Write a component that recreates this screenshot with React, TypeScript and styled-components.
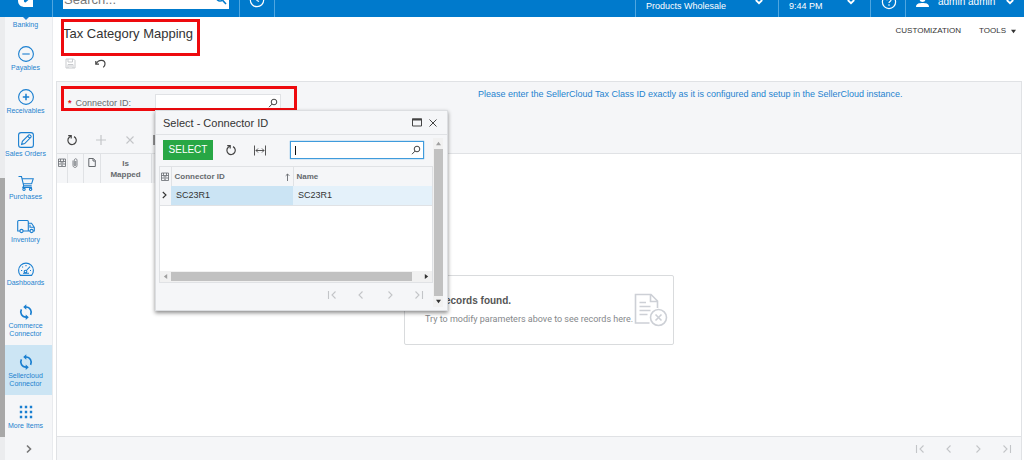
import React from 'react';
import styled, { createGlobalStyle, css } from 'styled-components';

const blue = '#007acc';
const link = '#2583cf';
const panel = '#f5f6f8';
const line = '#e0e2e5';
const muted = '#666a6e';

const GlobalStyle = createGlobalStyle`
  *, *::before, *::after { box-sizing: border-box; }
  body {
    margin: 0;
    background: #fff;
    color: #333;
    font-family: "Liberation Sans", Arial, sans-serif;
    font-size: 9px;
    line-height: 12px;
  }
  button, input { font: inherit; color: inherit; }
  svg { flex: none; }
`;

const Page = styled.div`
  position: relative;
  display: flex;
  flex-direction: column;
  min-height: 100vh;
`;

const Header = styled.header`
  display: flex;
  align-items: flex-end;
  height: 17px;
  overflow: hidden;
  background: ${blue};
  color: #fff;
`;

const HeaderCell = styled.div<{ $width: number }>`
  display: flex;
  align-items: flex-end;
  justify-content: center;
  flex: none;
  width: ${p => p.$width}px;
  height: 36px;
  border-right: 1px solid #4fa6e0;
`;

const LogoSpace = styled.div`
  display: flex;
  margin-bottom: 10px;
`;

const HeaderSearch = styled.div`
  display: flex;
  align-items: center;
  width: 166px;
  height: 20px;
  margin-bottom: 8px;
  padding: 0 2px 0 1px;
  background: #fff;
  color: ${blue};
`;

const HeaderInput = styled.input`
  flex: 1;
  min-width: 0;
  padding: 0;
  border: 0;
  outline: 0;
  background: none;
  font-size: 13px;
  &::placeholder { color: #777; opacity: 1; }
`;

const HeaderSpacer = styled.div`
  flex: 1;
  height: 36px;
  border-right: 1px solid #4fa6e0;
`;

const HeaderButton = styled.button<{ $width: number }>`
  display: flex;
  align-items: center;
  flex: none;
  width: ${p => p.$width}px;
  height: 36px;
  padding: 5px 15px 0 10px;
  border: 0;
  border-right: 1px solid #4fa6e0;
  background: none;
  text-align: left;
  &:last-child { border-right: 0; padding-right: 10px; }
`;

const HeaderText = styled.span`
  flex: 1;
  padding-top: 8px;
  white-space: nowrap;
`;

const UserName = styled.span`
  flex: 1;
  margin-left: 9px;
  font-size: 10px;
  white-space: nowrap;
`;

const IconOnly = styled.button<{ $dim?: boolean }>`
  display: inline-flex;
  align-items: center;
  justify-content: center;
  flex: none;
  width: 16px;
  height: 16px;
  padding: 0;
  border: 0;
  background: none;
  color: ${p => (p.$dim ? '#c3c5c8' : '#444')};
`;

const Body = styled.div`
  display: flex;
  flex: 1;
`;

const SideScroll = styled.div`
  display: flex;
  flex-direction: column;
  flex: none;
  width: 5px;
  padding: 161px 0 23px;
  background: #ebecee;
`;

const SideThumb = styled.div`
  flex: 1;
  background: #a8a8a8;
`;

const Sidebar = styled.nav`
  display: flex;
  flex-direction: column;
  flex: none;
  width: 48px;
  border-right: 1px solid #e9ebee;
  background: ${panel};
`;

const SideItem = styled.a<{ $active?: boolean; $tall?: boolean }>`
  display: flex;
  flex-direction: column;
  align-items: center;
  justify-content: center;
  gap: 1px;
  height: ${p => (p.$tall ? 50 : 43)}px;
  padding-right: 6px;
  background: ${p => (p.$active ? '#cce5f4' : 'transparent')};
  color: ${link};
  font-size: 7px;
  line-height: 8px;
  text-align: center;
  text-decoration: none;
  white-space: nowrap;
  svg { color: #1a7fd0; }
`;

const SideFirst = styled(SideItem)`
  justify-content: flex-start;
  height: 20px;
`;

const SideExpand = styled.button`
  display: flex;
  align-items: center;
  justify-content: center;
  height: 22px;
  padding: 0;
  border: 0;
  background: none;
  color: #777;
`;

const Main = styled.main`
  display: flex;
  flex-direction: column;
  flex: 1;
  min-width: 0;
  padding: 0 2px 0 3px;
`;

const TitleBar = styled.div`
  display: flex;
  align-items: center;
  justify-content: space-between;
  height: 28px;
  padding: 0 6px 0 7px;
`;

const Title = styled.h1`
  margin: 0;
  padding-top: 6px;
  font-size: 13px;
  font-weight: 400;
  line-height: 16px;
`;

const TitleMenu = styled.div`
  display: flex;
  gap: 18px;
`;

const MenuButton = styled.button`
  display: flex;
  align-items: center;
  gap: 5px;
  padding: 0;
  border: 0;
  background: none;
  font-size: 8px;
`;

const PageTools = styled.div`
  display: flex;
  align-items: center;
  gap: 14px;
  height: 36px;
  padding: 0 6px;
`;

const Panel = styled.section`
  display: flex;
  flex-direction: column;
  flex: 1;
  border: 1px solid ${line};
  border-bottom: 0;
`;

const Form = styled.form`
  display: flex;
  align-items: flex-start;
  height: 45px;
  padding-top: 6px;
  background: ${panel};
`;

const Field = styled.div`
  display: flex;
  align-items: center;
  padding: 6px 0 0 11px;
`;

const Label = styled.label`
  width: 87px;
  color: ${muted};
`;

const Required = styled.span`
  margin-right: 4px;
  color: #e01b1b;
  font-weight: 700;
`;

const Lookup = styled.div<{ $focus?: boolean; $width: number }>`
  display: flex;
  align-items: center;
  width: ${p => p.$width}px;
  height: ${p => (p.$focus ? 18 : 17)}px;
  padding-right: 2px;
  border: 1px solid ${line};
  background: #fff;
  color: #444;
  ${p => p.$focus && css`
    border-color: #3f9bdc;
    box-shadow: 0 0 1px #3f9bdc;
  `}
`;

const LookupInput = styled.input`
  flex: 1;
  min-width: 0;
  padding: 0 4px;
  border: 0;
  outline: 0;
  background: none;
`;

const Caret = styled.span`
  width: 1px;
  height: 9px;
  margin-left: 4px;
  background: #111;
`;

const Notice = styled.p`
  margin: 0 0 0 197px;
  color: ${link};
  white-space: nowrap;
`;

const GridTools = styled.div`
  display: flex;
  align-items: center;
  gap: 13px;
  height: 26px;
  padding: 0 7px;
  background: ${panel};
`;

const HeadTable = styled.table`
  width: 140px;
  border-collapse: collapse;
  table-layout: fixed;
  background: ${panel};
`;

const HeadCell = styled.th`
  height: 29px;
  padding: 4px 0 0;
  border-right: 1px solid ${line};
  color: ${muted};
  font-size: 8px;
  font-weight: 700;
  line-height: 11px;
  vertical-align: top;
`;

const GridArea = styled.div`
  display: flex;
  flex-direction: column;
  flex: 1;
  border-top: 1px solid ${line};
`;

const GridBody = styled.div`
  display: flex;
  align-items: center;
  justify-content: center;
  flex: 1;
`;

const Empty = styled.div`
  display: flex;
  align-items: center;
  justify-content: space-between;
  width: 270px;
  height: 70px;
  padding: 0 5px 0 20px;
  border: 1px solid #d9dbdd;
  border-radius: 2px;
`;

const EmptyTitle = styled.h2`
  margin: 0 0 6px;
  color: #555;
  font-size: 10px;
  line-height: 12px;
`;

const EmptyText = styled.p`
  margin: 0;
  color: #85888b;
  font-family: Roboto, "Liberation Sans", sans-serif;
  white-space: nowrap;
`;

const Pager = styled.div`
  display: flex;
  align-items: center;
  justify-content: flex-end;
  gap: 13px;
  height: 24px;
  padding-right: 6px;
`;

const GridFoot = styled(Pager)`
  border-top: 1px solid ${line};
  background: ${panel};
`;

const Mark = styled.div<{ $x: number; $y: number; $w: number; $h: number }>`
  position: absolute;
  left: ${p => p.$x}px;
  top: ${p => p.$y}px;
  width: ${p => p.$w}px;
  height: ${p => p.$h}px;
  border: 3px solid #ee0a0e;
  pointer-events: none;
`;

const Dialog = styled.section`
  position: absolute;
  left: 155px;
  top: 110px;
  width: 293px;
  border: 1px solid #dcdee1;
  background: ${panel};
  box-shadow: 0 2px 4px rgba(0, 0, 0, 0.45);
`;

const DialogHead = styled.div`
  display: flex;
  align-items: center;
  justify-content: space-between;
  height: 24px;
  padding: 0 6px 0 7px;
  border-bottom: 1px solid ${line};
`;

const DialogTitle = styled.h2`
  margin: 0;
  font-size: 11px;
  font-weight: 400;
`;

const DialogBody = styled.div`
  display: flex;
  padding: 3px 4px 3px 3px;
`;

const DialogMain = styled.div`
  flex: 1;
  min-width: 0;
`;

const DialogTools = styled.div`
  display: flex;
  align-items: center;
  gap: 13px;
  height: 28px;
  padding: 0 9px 4px 4px;
`;

const SelectButton = styled.button`
  width: 50px;
  height: 20px;
  margin-right: -3px;
  padding: 0;
  border: 0;
  background: #28a745;
  color: #fff;
  font-size: 10px;
`;

const Tail = styled.div`
  margin-left: auto;
`;

const Results = styled.div`
  display: flex;
  flex-direction: column;
  height: 117px;
  border: 1px solid ${line};
  background: #fff;
`;

const ResultTable = styled.table`
  width: 100%;
  border-collapse: collapse;
  table-layout: fixed;
`;

const ResultHead = styled.th<{ $narrow?: boolean }>`
  height: 19px;
  padding: ${p => (p.$narrow ? '0 1px' : '0 3px')};
  border-right: 1px solid ${line};
  background: ${panel};
  color: ${muted};
  font-size: 8px;
  text-align: left;
  &:last-child { border-right: 0; }
`;

const HeadLine = styled.div`
  display: flex;
  align-items: center;
  justify-content: space-between;
`;

const ResultCell = styled.td<{ $tone: string; $narrow?: boolean }>`
  height: 19px;
  padding: ${p => (p.$narrow ? '0 2px' : '0 5px')};
  border-bottom: 1px solid ${line};
  background: ${p => p.$tone};
`;

const HScroll = styled.div`
  display: flex;
  align-items: center;
  justify-content: space-between;
  height: 11px;
  margin-top: auto;
  padding: 0 3px;
  background: #f1f1f1;
`;

const HThumb = styled.div`
  flex: 1;
  height: 9px;
  margin: 0 12px 0 3px;
  background: #c1c1c1;
`;

const VScroll = styled.div`
  display: flex;
  flex-direction: column;
  align-items: center;
  width: 10px;
  padding: 3px 0;
  background: #f1f1f1;
`;

const VThumb = styled.div`
  flex: 1;
  width: 9px;
  margin: 3px 0;
  background: #c1c1c1;
`;

type IconProps = { size?: number; w?: number; box?: string; sw?: number; children: React.ReactNode };
const Icon = ({ size = 18, w, box = '0 0 18 18', sw = 1.1, children }: IconProps) => (
  <svg width={w ?? size} height={size} viewBox={box} fill="none" stroke="currentColor" strokeWidth={sw} aria-hidden="true">
    {children}
  </svg>
);

const Chevron = () => (
  <Icon size={8} box="0 0 8 8" sw={1.8}><path d="M.8 2L4 5.200 7.200 2" /></Icon>
);
const Lens = () => (
  <Icon size={10} box="0 0 10 10" sw={1}><circle cx="6" cy="4" r="2.800" /><path d="M4 6.100L1 9.200" /></Icon>
);
const Refresh = () => (
  <Icon size={12} box="0 0 12 12" sw={1.2}>
    <path d="M8 2.600A4.200 4.200 0 1 1 3.300 3.200L5 2" /><path d="M2.200 1.600H5.200V4.600" />
  </Icon>
);
const Columns = () => (
  <Icon size={9} w={8} box="0 0 8 9" sw={0.8}>
    <path d="M.5 1h7v7.500h-7zM.5 3.500h7M2.500 3.500V1M5.500 3.500V1M.5 6h7M2.500 4.800h3M3 7.200h2" />
  </Icon>
);
const Sync = () => (
  <Icon sw={1.7}>
    <path d="M9 4A5.300 5.300 0 0 1 13.600 11.800M9 14.200A5.300 5.300 0 0 1 4.400 6.400" />
    <path d="M9.300 1.300v5.400L6.200 4zM8.700 11.500v5.400l3.100-2.700z" fill="currentColor" stroke="none" />
  </Icon>
);
const Arrow = ({ d, dim }: { d: string; dim?: boolean }) => (
  <svg width="5" height="5" viewBox="0 0 6 6" fill={dim ? '#a0a0a0' : '#333'} aria-hidden="true"><path d={d} /></svg>
);

const pagerSteps = [
  { label: 'First page', d: 'M1.500 1v8M8.500 1.500L5 5l3.500 3.500' },
  { label: 'Previous page', d: 'M6.500 1.500L3 5l3.500 3.500' },
  { label: 'Next page', d: 'M3.500 1.500L7 5 3.500 8.500' },
  { label: 'Last page', d: 'M1.500 1.500L5 5 1.500 8.500M8.500 1v8' },
];
const PagerSteps = () => (
  <>
    {pagerSteps.map(s => (
      <IconOnly key={s.label} type="button" $dim aria-label={s.label}>
        <Icon size={10} box="0 0 10 10"><path d={s.d} /></Icon>
      </IconOnly>
    ))}
  </>
);

const modules = [
  { label: 'Payables', icon: <><circle cx="9" cy="9" r="7.400" /><path d="M5.300 9h7.400" /></> },
  { label: 'Receivables', icon: <><circle cx="9" cy="9" r="7.400" /><path d="M5.800 9h6.400M9 5.800v6.400" strokeWidth="1.500" /></> },
  { label: 'Sales Orders', icon: <><rect x="1.600" y="1.600" width="14.800" height="14.800" rx="2.500" /><path d="M4.600 13.400l.8-3.100 6.400-6.400c.8-.7 3 1.400 2.200 2.300L7.700 12.600zM10.600 5.100l2.300 2.300" /></> },
  { label: 'Purchases', icon: <><path d="M1.500 2.500h3l2.200 9.300h8M5 4.800h11.200l-1.600 5H6.300M6.700 11.800l-.8 1.600h9" /><circle cx="7" cy="15.300" r="1.200" /><circle cx="13.600" cy="15.300" r="1.200" /></> },
  { label: 'Inventory', icon: <><path d="M3 14H.7V4.500q0-1 1-1h8.600q1 0 1 1V14H6M11.300 6.300h3.200l2.800 4V14h-1.200M11.300 14h1.800M13 7.800v2.500h4" /><circle cx="4.500" cy="14" r="1.600" /><circle cx="14.600" cy="14" r="1.600" /></> },
  { label: 'Dashboards', icon: <><path d="M3.400 15.400a7.400 7.400 0 1 1 11.200 0z" /><circle cx="8.500" cy="11.500" r="1.300" /><path d="M9.400 10.500L13 6.600M4 10.500h1.200M5.200 6.600l.8.800M9 5v1.200M13 10.500h1M6 13.300h6" /></> },
];

export default function App() {
  return (
    <Page>
      <GlobalStyle />
      <Header>
        <HeaderCell $width={53}>
          <LogoSpace>
            <svg width="16" height="16" viewBox="0 0 16 16" aria-label="Home">
              <path fill="#fff" d="M8 2C3 2 0 5 0 9.500C0 14 3 16 7 16H15V2Z" />
              <path fill={blue} d="M7 2h4v6.500L7.500 11.500C5.500 11 5.500 9 7 7z" />
            </svg>
          </LogoSpace>
        </HeaderCell>
        <HeaderCell $width={187}>
          <HeaderSearch>
            <HeaderInput aria-label="Search" placeholder="Search..." />
            <svg width="12" height="12" viewBox="0 0 12 12" fill="none" stroke="currentColor" strokeWidth="1.600"><circle cx="5" cy="4.500" r="3.500" /><path d="M7.500 7.200L11 11" /></svg>
          </HeaderSearch>
        </HeaderCell>
        <HeaderCell $width={35}>
          <svg width="16" height="26" viewBox="0 0 16 26" fill="none" stroke="#fff" strokeWidth="1.200"><circle cx="8" cy="9" r="6.700" /><path d="M8 5v4.500l2 1" /></svg>
        </HeaderCell>
        <HeaderSpacer />
        <HeaderButton type="button" $width={143}><HeaderText>Products Wholesale</HeaderText><Chevron /></HeaderButton>
        <HeaderButton type="button" $width={92}><HeaderText>9:44 PM</HeaderText><Chevron /></HeaderButton>
        <HeaderButton type="button" $width={35} aria-label="Help">
          <svg width="16" height="16" viewBox="0 0 16 16" fill="none" stroke="#fff" strokeWidth="1.200"><circle cx="8" cy="8" r="6.600" /><path d="M6 6.300c0-2.700 4-2.500 4-.2 0 1.500-2 1.500-2 3M8 10.300v1.400" /></svg>
        </HeaderButton>
        <HeaderButton type="button" $width={118}>
          <svg width="13" height="14" viewBox="0 0 13 14" fill="#fff"><circle cx="6.500" cy="4" r="3" /><path d="M0 12c0-3.500 3-4 6.500-4S13 8.500 13 12z" /></svg>
          <UserName>admin admin</UserName><Chevron />
        </HeaderButton>
      </Header>

      <Body>
        <SideScroll><SideThumb /></SideScroll>
        <Sidebar>
          <SideFirst href="#banking">
            <svg width="8" height="3" viewBox="0 0 8 3" fill="currentColor"><path d="M1 0h6L4 3z" /></svg>
            Banking
          </SideFirst>
          {modules.map(m => (
            <SideItem key={m.label} href="#module"><Icon>{m.icon}</Icon>{m.label}</SideItem>
          ))}
          <SideItem href="#commerce" $tall><Sync /><span>Commerce<br />Connector</span></SideItem>
          <SideItem href="#sellercloud" $tall $active><Sync /><span>Sellercloud<br />Connector</span></SideItem>
          <SideItem href="#more">
            <Icon><path strokeWidth="2.400" strokeDasharray="2.400 2.600" d="M2.800 4h13M2.800 9h13M2.800 14h13" /></Icon>
            More Items
          </SideItem>
          <SideExpand type="button" aria-label="Expand menu">
            <Icon size={10} box="0 0 10 10" sw={1.6}><path d="M3 1.500L6.500 5 3 8.500" /></Icon>
          </SideExpand>
        </Sidebar>

        <Main>
          <TitleBar>
            <Title>Tax Category Mapping</Title>
            <TitleMenu>
              <MenuButton type="button">CUSTOMIZATION</MenuButton>
              <MenuButton type="button">TOOLS <Arrow d="M0 1h6L3 5z" /></MenuButton>
            </TitleMenu>
          </TitleBar>
          <PageTools>
            <IconOnly type="button" $dim aria-label="Save">
              <Icon size={11} box="0 0 11 11" sw={0.9}><path d="M1 1h7.500L10 2.500V10H1zM3 1v3h4.500V1M3 10V6.500h5V10M4 8h3" /></Icon>
            </IconOnly>
            <IconOnly type="button" aria-label="Undo">
              <Icon size={11} box="0 0 11 11" sw={1.2}><path d="M1.200 5.800C3.500.8 10.200 1.500 10 6c0 1.600-.8 2.600-1.800 3.400" /><path d="M.8 2.900v3.200H4" /></Icon>
            </IconOnly>
          </PageTools>
          <Panel>
            <Form>
              <Field>
                <Label htmlFor="connector"><Required>*</Required>Connector ID:</Label>
                <Lookup $width={126}><LookupInput id="connector" /><Lens /></Lookup>
              </Field>
              <Notice>Please enter the SellerCloud Tax Class ID exactly as it is configured and setup in the SellerCloud instance.</Notice>
            </Form>
            <GridTools>
              <IconOnly type="button" aria-label="Refresh"><Refresh /></IconOnly>
              <IconOnly type="button" $dim aria-label="Add row"><Icon size={10} box="0 0 10 10" sw={1.2}><path d="M0 5h10M5 0v10" /></Icon></IconOnly>
              <IconOnly type="button" $dim aria-label="Delete row"><Icon size={8} box="0 0 8 8"><path d="M.5.5l7 7M7.500.5l-7 7" /></Icon></IconOnly>
              <IconOnly type="button" aria-label="Fit columns"><Icon size={12} box="0 0 12 12"><path d="M1 1v10M11 1v10M2.500 6h7" /></Icon></IconOnly>
            </GridTools>
            <GridArea>
              <HeadTable>
                <colgroup><col width="10" /><col width="16" /><col width="17" /><col width="51" /><col /></colgroup>
                <thead>
                  <tr>
                    <HeadCell aria-label="Columns"><Columns /></HeadCell>
                    <HeadCell aria-label="Files"><Icon size={10} w={6} box="0 0 6 10" sw={0.8}><path d="M1 2.500v4.800c0 2.800 4 2.800 4 0V2.400C5 .2 2.300.2 2.300 2.400V7c0 1 1.400 1 1.400 0V3" /></Icon></HeadCell>
                    <HeadCell aria-label="Notes"><Icon size={9} w={8} box="0 0 8 9" sw={1}><path d="M.8.5h4.500l2 2v6H.8zM5 .5V3h2.300" /></Icon></HeadCell>
                    <HeadCell>Is<br />Mapped</HeadCell>
                    <HeadCell />
                  </tr>
                </thead>
              </HeadTable>
              <GridBody>
                <Empty>
                  <div>
                    <EmptyTitle>No records found.</EmptyTitle>
                    <EmptyText>Try to modify parameters above to see records here.</EmptyText>
                  </div>
                  <svg width="34" height="34" viewBox="0 0 34 34" fill="none" stroke="#cdd0d6" strokeWidth="1.600" aria-hidden="true">
                    <path d="M15.500 30H1.500V1.500H17L23.500 8v7M16.500 1.500V8.500h7M5.500 9.500H12M5.500 13.500h11M5.500 17.500h11M5.500 21.500h8" />
                    <circle cx="24.500" cy="24.500" r="8" /><path d="M21.500 21.500l6 6M27.500 21.500l-6 6" />
                  </svg>
                </Empty>
              </GridBody>
            </GridArea>
            <GridFoot><PagerSteps /></GridFoot>
          </Panel>
        </Main>
      </Body>

      <Mark $x={61} $y={19} $w={139} $h={37} />
      <Mark $x={61} $y={86} $w={236} $h={25} />

      <Dialog role="dialog" aria-label="Select - Connector ID">
        <DialogHead>
          <DialogTitle>Select - Connector ID</DialogTitle>
          <div>
            <IconOnly type="button" aria-label="Maximize"><Icon size={9} w={10} box="0 0 10 9" sw={1}><path d="M.5 1h9v7h-9z" /><path d="M0 1.500h10" strokeWidth="2" /></Icon></IconOnly>
            <IconOnly type="button" aria-label="Close"><Icon size={8} box="0 0 8 8" sw={1}><path d="M.5.5l7 7M7.500.5l-7 7" /></Icon></IconOnly>
          </div>
        </DialogHead>
        <DialogBody>
          <DialogMain>
            <DialogTools>
              <SelectButton type="button">SELECT</SelectButton>
              <IconOnly type="button" aria-label="Refresh"><Refresh /></IconOnly>
              <IconOnly type="button" aria-label="Fit columns"><Icon size={11} w={12} box="0 0 12 11" sw={0.9}><path d="M.5.5v10M11.500.5v10M2 5.500h8M4 3.500l-2 2 2 2M8 3.500l2 2-2 2" /></Icon></IconOnly>
              <Tail>
                <Lookup $focus $width={134}><Caret /><LookupInput aria-label="Find connector" /><Lens /></Lookup>
              </Tail>
            </DialogTools>
            <Results>
              <ResultTable>
                <colgroup><col width="11" /><col width="122" /><col /></colgroup>
                <thead>
                  <tr>
                    <ResultHead $narrow aria-label="Columns"><HeadLine><Columns /></HeadLine></ResultHead>
                    <ResultHead><HeadLine>Connector ID<Icon size={8} w={5} box="0 0 5 8" sw={0.9}><path d="M2.500 8V1M.7 2.800L2.500 1l1.800 1.800" /></Icon></HeadLine></ResultHead>
                    <ResultHead>Name</ResultHead>
                  </tr>
                </thead>
                <tbody>
                  <tr>
                    <ResultCell $narrow $tone={panel}><HeadLine><Icon size={8} w={5} box="0 0 5 8"><path d="M.8 1L4 4 .8 7" /></Icon></HeadLine></ResultCell>
                    <ResultCell $tone="#cbe4f4">SC23R1</ResultCell>
                    <ResultCell $tone="#e4f1fa">SC23R1</ResultCell>
                  </tr>
                </tbody>
              </ResultTable>
              <HScroll><Arrow dim d="M5 0v6L1 3z" /><HThumb /><Arrow d="M1 0v6l4-3z" /></HScroll>
            </Results>
            <Pager><PagerSteps /></Pager>
          </DialogMain>
          <VScroll><Arrow dim d="M0 5h6L3 1z" /><VThumb /><Arrow d="M0 1h6L3 5z" /></VScroll>
        </DialogBody>
      </Dialog>
    </Page>
  );
}
